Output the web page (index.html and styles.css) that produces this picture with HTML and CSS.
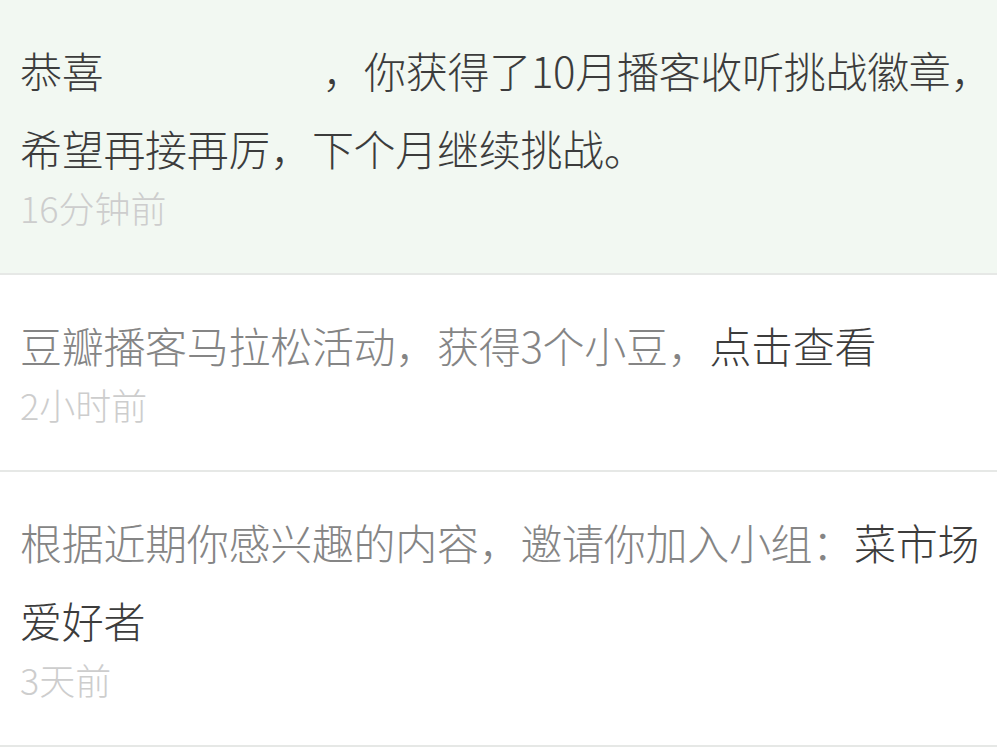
FILE: index.html
```html
<!DOCTYPE html>
<html>
<head>
<meta name="viewport" content="width=device-width, initial-scale=1">
<link rel="stylesheet" href="styles.css">
</head>
<body>

<ul class="notice-list">
  <!-- unread notice gets the green tint -->
  <li class="notice unread">
    <p class="notice-text">恭喜<span class="masked"></span>，你获得了10月播客收听挑战徽章，希望再接再厉，下个月继续挑战。</p>
    <span class="notice-time">16分钟前</span>
  </li>

  <li class="notice">
    <p class="notice-text muted">豆瓣播客马拉松活动，获得3个小豆，<a href="#" class="notice-link">点击查看</a></p>
    <span class="notice-time">2小时前</span>
  </li>

  <li class="notice">
    <p class="notice-text muted">根据近期你感兴趣的内容，邀请你加入小组：<a href="#" class="notice-link">菜市场爱好者</a></p>
    <span class="notice-time">3天前</span>
  </li>
</ul>

</body>
</html>
```

FILE: styles.css
```css
body {
  margin: 0;
  background: #fff;
  font-family: "Noto Sans CJK SC", "Noto Sans", sans-serif;
  font-weight: 300;
}

.notice-list {
  list-style: none;
  margin: 0;
  padding: 0;
}

.notice {
  display: flex;
  flex-direction: column;
  padding: 31px 0 46px 20px;
  border-bottom: 2px solid #e6e8e6;
}

.notice.unread {
  background-color: #f2f8f2;
}

.notice-text {
  margin: 0;
  font-size: 42px;
  line-height: 78px;
  color: #3c3c3c;
  letter-spacing: -0.3px;
}

.notice-text.muted {
  color: #858585;
}

.notice-link {
  color: #3c3c3c;
  text-decoration: none;
}

/* user name is blanked out in the capture */
.masked {
  display: inline-block;
  width: 219px;
  height: 1px;
}

.notice-time {
  font-size: 36px;
  line-height: 40px;
  color: #cdcdcd;
}
```
